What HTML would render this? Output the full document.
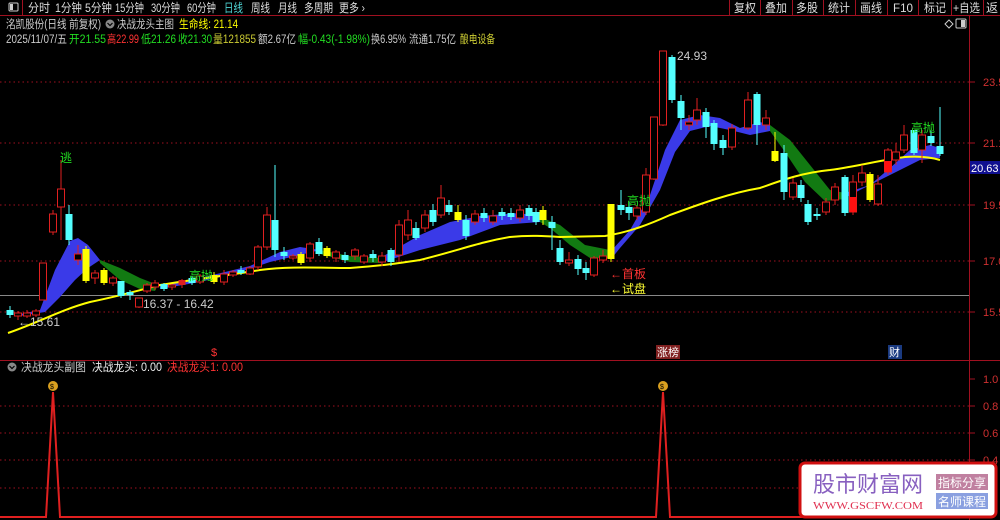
<!DOCTYPE html>
<html><head><meta charset="utf-8"><style>
body{margin:0;background:#000;width:1000px;height:520px;overflow:hidden;font-family:"Liberation Sans","Noto Sans CJK SC",sans-serif;}
svg{position:absolute;left:0;top:0}
.t{font-family:"Liberation Sans","Noto Sans CJK SC",sans-serif;}
</style></head><body>
<svg width="1000" height="520" xmlns="http://www.w3.org/2000/svg" id="s">
<rect width="1000" height="520" fill="#000"/>
<line x1="0" y1="15.5" x2="1000" y2="15.5" stroke="#a01020"/>
<line x1="22.5" y1="0" x2="22.5" y2="15" stroke="#a01020"/>
<rect x="9" y="3" width="9" height="8" fill="none" stroke="#ccc" rx="1"/><rect x="10" y="4" width="3" height="6" fill="#ccc"/>
<g class="t" font-size="12" fill="#ddd" lengthAdjust="spacingAndGlyphs">
<text x="28" y="12" textLength="22" lengthAdjust="spacingAndGlyphs">分时</text>
<text x="55" y="12" textLength="27" lengthAdjust="spacingAndGlyphs">1分钟</text>
<text x="85" y="12" textLength="27" lengthAdjust="spacingAndGlyphs">5分钟</text>
<text x="115" y="12" textLength="29" lengthAdjust="spacingAndGlyphs">15分钟</text>
<text x="151" y="12" textLength="29" lengthAdjust="spacingAndGlyphs">30分钟</text>
<text x="187" y="12" textLength="29" lengthAdjust="spacingAndGlyphs">60分钟</text>
<text x="224" y="12" textLength="19" lengthAdjust="spacingAndGlyphs" fill="#4fd6d6">日线</text>
<text x="251" y="12" textLength="19" lengthAdjust="spacingAndGlyphs">周线</text>
<text x="278" y="12" textLength="19" lengthAdjust="spacingAndGlyphs">月线</text>
<text x="304" y="12" textLength="29" lengthAdjust="spacingAndGlyphs">多周期</text>
<text x="339" y="12" textLength="26" lengthAdjust="spacingAndGlyphs">更多 ›</text>
</g>
<g stroke="#a01020"><line x1="729.5" y1="0" x2="729.5" y2="15"/><line x1="760.5" y1="0" x2="760.5" y2="15"/><line x1="792.5" y1="0" x2="792.5" y2="15"/><line x1="823.5" y1="0" x2="823.5" y2="15"/><line x1="855.5" y1="0" x2="855.5" y2="15"/><line x1="887.5" y1="0" x2="887.5" y2="15"/><line x1="918.5" y1="0" x2="918.5" y2="15"/><line x1="951.5" y1="0" x2="951.5" y2="15"/><line x1="983.5" y1="0" x2="983.5" y2="15"/></g>
<g class="t" font-size="12" fill="#ddd">
<text x="734" y="12" textLength="22" lengthAdjust="spacingAndGlyphs">复权</text>
<text x="765" y="12" textLength="22" lengthAdjust="spacingAndGlyphs">叠加</text>
<text x="796" y="12" textLength="22" lengthAdjust="spacingAndGlyphs">多股</text>
<text x="828" y="12" textLength="22" lengthAdjust="spacingAndGlyphs">统计</text>
<text x="860" y="12" textLength="22" lengthAdjust="spacingAndGlyphs">画线</text>
<text x="893" y="12" textLength="20" lengthAdjust="spacingAndGlyphs">F10</text>
<text x="924" y="12" textLength="22" lengthAdjust="spacingAndGlyphs">标记</text>
<text x="953" y="12" textLength="27" lengthAdjust="spacingAndGlyphs">+自选</text>
<text x="986" y="12">返</text>
</g>
<g class="t" font-size="11.5">
<text x="6" y="28" fill="#ccc" textLength="95" lengthAdjust="spacingAndGlyphs">洺凯股份(日线 前复权)</text>
<circle cx="110" cy="24" r="4.5" fill="#888"/><path d="M107.5 23 L110 25.5 L112.5 23" stroke="#000" fill="none" stroke-width="1.2"/>
<text x="117" y="28" fill="#ccc" textLength="57" lengthAdjust="spacingAndGlyphs">决战龙头主图</text>
<text x="179" y="28" fill="#ffff00" textLength="59" lengthAdjust="spacingAndGlyphs">生命线: 21.14</text>
<text x="6" y="43" fill="#ccc" textLength="61" lengthAdjust="spacingAndGlyphs">2025/11/07/五</text>
<text x="69" y="43" fill="#22dd22" textLength="37" lengthAdjust="spacingAndGlyphs">开21.55</text>
<text x="107" y="43" fill="#ff3333" textLength="32" lengthAdjust="spacingAndGlyphs">高22.99</text>
<text x="141" y="43" fill="#22dd22" textLength="35" lengthAdjust="spacingAndGlyphs">低21.26</text>
<text x="178" y="43" fill="#22dd22" textLength="34" lengthAdjust="spacingAndGlyphs">收21.30</text>
<text x="213" y="43" fill="#cccc33" textLength="43" lengthAdjust="spacingAndGlyphs">量121855</text>
<text x="258" y="43" fill="#ccc" textLength="38" lengthAdjust="spacingAndGlyphs">额2.67亿</text>
<text x="298" y="43" fill="#22dd22" textLength="72" lengthAdjust="spacingAndGlyphs">幅-0.43(-1.98%)</text>
<text x="371" y="43" fill="#ccc" textLength="35" lengthAdjust="spacingAndGlyphs">换6.95%</text>
<text x="409" y="43" fill="#ccc" textLength="47" lengthAdjust="spacingAndGlyphs">流通1.75亿</text>
<text x="460" y="43" fill="#cccc33" textLength="35" lengthAdjust="spacingAndGlyphs">酿电设备</text>
</g>
<path d="M945 24 l4 -4 l4 4 l-4 4z" fill="none" stroke="#ccc"/>
<rect x="956" y="19" width="10" height="9" fill="none" stroke="#ccc" rx="1"/><rect x="961" y="20" width="4" height="7" fill="#ccc"/>
<line x1="969.5" y1="16" x2="969.5" y2="520" stroke="#a01020"/>
<line x1="0" y1="360.5" x2="1000" y2="360.5" stroke="#a01020"/>
<g stroke="#a01020" stroke-dasharray="1.5 3">
<line x1="0" y1="82" x2="969" y2="82"/><line x1="0" y1="143" x2="969" y2="143"/><line x1="0" y1="205" x2="969" y2="205"/><line x1="0" y1="261" x2="969" y2="261"/><line x1="0" y1="312" x2="969" y2="312"/>
<line x1="0" y1="406" x2="969" y2="406"/><line x1="0" y1="433" x2="969" y2="433"/><line x1="0" y1="460" x2="969" y2="460"/><line x1="0" y1="488" x2="969" y2="488"/>
</g>
<g stroke="#a01020"><line x1="970" y1="82" x2="975" y2="82"/><line x1="970" y1="143" x2="975" y2="143"/><line x1="970" y1="205" x2="975" y2="205"/><line x1="970" y1="261" x2="975" y2="261"/><line x1="970" y1="312" x2="975" y2="312"/><line x1="970" y1="379" x2="975" y2="379"/><line x1="970" y1="406" x2="975" y2="406"/><line x1="970" y1="433" x2="975" y2="433"/><line x1="970" y1="460" x2="975" y2="460"/><line x1="970" y1="488" x2="975" y2="488"/></g>
<g class="t" font-size="11" fill="#d03030">
<text x="983" y="86">23.5</text><text x="983" y="147">21.1</text><text x="983" y="209">19.5</text><text x="983" y="265">17.0</text><text x="983" y="316">15.5</text>
<text x="983" y="383">1.0</text><text x="983" y="410">0.8</text><text x="983" y="437">0.6</text><text x="983" y="464">0.4</text>
</g>
<rect x="970" y="161" width="30" height="13" fill="#101090"/><text x="971" y="172" class="t" font-size="11" fill="#fff">20.63</text>
<line x1="0" y1="295.5" x2="969" y2="295.5" stroke="#888"/>
<g fill="#3a3ae8">
<polygon points="20,314 40,310 55,270 70,241 78,238 88,245 100,260 88,268 75,280 60,297 45,312 20,316"/>
<polygon points="160,285 200,278 250,266 280,252 300,247 320,250 300,255 270,262 240,272 200,282 160,289"/>
<polygon points="380,258 420,235 450,222 480,216 520,213 540,217 540,222 500,225 460,240 420,250 380,263"/>
<polygon points="612,250 630,230 650,195 665,150 680,120 700,115 720,118 740,128 760,122 770,125 770,131 750,135 730,130 710,126 690,131 675,152 660,190 640,225 620,248 612,258"/>
<polygon points="845,193 870,185 890,168 910,150 930,145 940,148 940,158 920,160 900,170 880,180 860,190 845,198"/>
</g>
<g fill="#127a12">
<polygon points="100,260 120,268 140,278 158,285 155,291 140,289 120,280 100,263"/>
<polygon points="320,250 350,256 380,258 380,263 350,262 320,254"/>
<polygon points="540,217 560,225 585,245 610,250 610,258 590,258 570,245 550,228 540,222"/>
<polygon points="770,125 790,140 810,165 830,190 845,193 845,199 825,201 805,182 785,152 770,131"/>
</g>
<path fill="none" stroke="#ffff00" stroke-width="2" d="M8,333 C40,322 60,310 90,302 C120,296 140,290 160,285 C190,280 230,275 260,270 C290,266 320,268 350,268 C380,266 400,263 420,260 C460,250 480,242 510,237 C530,235 545,236 560,237 L605,236 C630,232 650,224 670,215 C700,204 730,193 760,188 C780,181 800,173 830,170 C860,166 880,160 905,157 C920,156 930,157 940,160"/>
<g id="c"></g>
<g class="t" font-size="12">
<text x="60" y="162" fill="#22dd22">逃</text>
<text x="189" y="280" fill="#22dd22">高抛</text>
<text x="627" y="205" fill="#22dd22">高抛</text>
<text x="911" y="132" fill="#22dd22">高抛</text>
<text x="610" y="278" fill="#ff3333">←首板</text>
<text x="610" y="293" fill="#ffff33">←试盘</text>
<text x="143" y="308" fill="#ccc">16.37 - 16.42</text>
<text x="18" y="326" fill="#ccc">←15.61</text>
<text x="677" y="60" fill="#ccc">24.93</text>
<text x="211" y="356" fill="#ff3333" font-size="11">$</text>
</g>
<rect x="656" y="345" width="24" height="14" fill="#802020"/><text x="657" y="356" class="t" font-size="11" fill="#fff">涨榜</text>
<rect x="888" y="345" width="14" height="14" fill="#1a3a80"/><text x="889" y="356" class="t" font-size="11" fill="#fff">财</text>
<circle cx="12" cy="367" r="4.5" fill="#888"/><path d="M9.5 366 L12 368.5 L14.5 366" stroke="#000" fill="none" stroke-width="1.2"/>
<g class="t" font-size="11.5">
<text x="21" y="371" fill="#ccc" textLength="65" lengthAdjust="spacingAndGlyphs">决战龙头副图</text>
<text x="92" y="371" fill="#eee" textLength="70" lengthAdjust="spacingAndGlyphs">决战龙头: 0.00</text>
<text x="167" y="371" fill="#ff3333" textLength="76" lengthAdjust="spacingAndGlyphs">决战龙头1: 0.00</text></g>
<polyline fill="none" stroke="#e02020" stroke-width="2" points="0,517 46,517 53,392 60,517 656,517 663,392 670,517 969,517"/>
<circle cx="53" cy="386" r="5" fill="#d9a020"/><circle cx="663" cy="386" r="5" fill="#d9a020"/>
<text x="50" y="389" font-size="7" fill="#000">$</text><text x="660" y="389" font-size="7" fill="#000">$</text>
<rect x="800" y="463" width="196" height="54" rx="5" fill="#fff" stroke="#d01010" stroke-width="3"/>
<text x="813" y="492" font-family="'Noto Sans CJK SC',sans-serif" font-size="22" fill="#8860c0" textLength="110" lengthAdjust="spacingAndGlyphs">股市财富网</text>
<text x="813" y="509" font-family="'Liberation Serif',serif" font-size="10" fill="#e03050" textLength="110" lengthAdjust="spacingAndGlyphs">WWW.GSCFW.COM</text>
<rect x="936" y="474" width="52" height="16" fill="#c080a0"/><text x="938" y="487" class="t" font-size="12" fill="#fff">指标分享</text>
<rect x="936" y="493" width="52" height="16" fill="#8aa0e0"/><text x="938" y="506" class="t" font-size="12" fill="#fff">名师课程</text>
</svg>
<script>
var C=[[10,310,315,306,318,'c'],[18,313,316,311,320,'r'],[27,313,316,310,318,'r'],[36,311,315,309,317,'r'],[43,263,300,263,300,'r'],[53,214,232,210,235,'r'],[61,189,207,160,240,'r'],[69,214,240,205,245,'c'],[78,254,260,245,265,'r'],[86,249,281,246,283,'y'],[95,273,278,270,284,'r'],[104,270,283,268,285,'y'],[113,278,283,276,286,'r'],[121,281,296,281,298,'c'],[130,292,295,290,300,'c'],[139,298,307,298,308,'r'],[147,285,291,283,293,'r'],[155,283,287,280,290,'r'],[164,284,289,283,291,'c'],[172,285,287,284,290,'r'],[182,280,285,279,288,'f'],[192,278,283,276,285,'c'],[200,276,282,274,284,'r'],[214,275,282,272,284,'y'],[224,274,282,270,285,'r'],[233,272,275,270,277,'r'],[241,270,273,266,275,'c'],[250,268,274,266,275,'r'],[258,247,267,245,270,'r'],[267,215,247,207,250,'r'],[275,220,250,165,257,'c'],[284,252,256,247,260,'c'],[293,256,258,254,260,'r'],[301,254,263,252,265,'y'],[310,244,258,242,262,'r'],[319,242,254,238,256,'c'],[327,248,256,246,258,'y'],[336,252,258,250,262,'r'],[345,255,260,252,263,'c'],[355,250,256,248,260,'r'],[364,256,262,254,264,'r'],[373,254,258,250,262,'c'],[382,256,262,252,266,'r'],[391,250,262,248,266,'c'],[399,225,255,220,262,'r'],[408,220,235,210,240,'r'],[416,228,238,222,240,'c'],[425,215,228,210,232,'r'],[433,210,222,204,226,'c'],[441,198,215,185,218,'r'],[449,205,212,200,215,'c'],[458,212,220,205,222,'y'],[466,220,236,215,240,'c'],[475,214,222,210,225,'r'],[484,213,218,208,222,'c'],[493,216,222,210,225,'r'],[502,212,216,208,220,'c'],[511,213,217,208,220,'c'],[520,210,218,205,222,'r'],[529,208,216,205,220,'c'],[536,212,222,208,225,'c'],[543,210,220,206,225,'y'],[552,222,228,216,250,'c'],[560,248,262,240,265,'c'],[569,260,263,252,266,'r'],[578,259,269,255,275,'c'],[586,268,273,262,280,'c'],[594,258,275,256,277,'r'],[603,256,260,250,263,'r'],[611,204,259,204,262,'y'],[621,205,210,190,215,'c'],[629,207,213,202,220,'c'],[637,208,216,205,220,'r'],[646,175,212,168,215,'r'],[654,117,179,117,180,'r'],[663,51,125,51,126,'r'],[672,57,100,55,103,'c'],[681,101,118,95,130,'c'],[689,122,125,115,130,'r'],[697,110,120,98,125,'r'],[706,112,127,108,138,'c'],[714,123,144,120,150,'c'],[723,140,148,135,155,'c'],[732,128,147,124,150,'r'],[748,100,128,92,130,'r'],[757,94,125,92,145,'c'],[766,118,125,110,130,'r'],[775,151,161,132,162,'y'],[784,153,192,145,200,'c'],[793,183,197,178,200,'r'],[801,185,198,180,202,'c'],[808,204,222,200,225,'c'],[817,214,216,208,220,'c'],[826,202,212,198,215,'r'],[835,187,200,183,205,'r'],[845,177,213,175,216,'c'],[853,182,212,175,215,'x'],[862,173,182,165,186,'r'],[870,174,200,172,202,'y'],[878,184,204,175,206,'r'],[888,150,172,148,175,'x'],[896,152,160,143,165,'r'],[904,135,150,125,153,'r'],[914,130,153,130,155,'c'],[922,135,150,130,163,'r'],[931,136,143,130,146,'c'],[940,146,154,107,156,'c']];
var g=document.getElementById('c'),h='';
C.forEach(function(k){var x=k[0],t=k[1],b=k[2],wt=k[3],wb=k[4],y=k[5];
var col=(y=='c')?'#54ffff':(y=='y'?'#ffff00':'#e02020');
h+='<line x1="'+x+'" y1="'+wt+'" x2="'+x+'" y2="'+wb+'" stroke="'+col+'"/>';
if(y=='r')h+='<rect x="'+(x-3.5)+'" y="'+t+'" width="7" height="'+Math.max(1,b-t)+'" fill="#000" stroke="#e02020"/>';
else if(y=='x'){h+='<rect x="'+(x-3.5)+'" y="'+t+'" width="7" height="'+(b-t)+'" fill="#000" stroke="#e02020"/><rect x="'+(x-3.5)+'" y="'+((t+b)/2)+'" width="7" height="'+((b-t)/2)+'" fill="#ff1010"/>';}
else h+='<rect x="'+(x-3.5)+'" y="'+t+'" width="7" height="'+Math.max(1,b-t)+'" fill="'+col+'"/>';
});
g.innerHTML=h;
</script>
</body></html>
